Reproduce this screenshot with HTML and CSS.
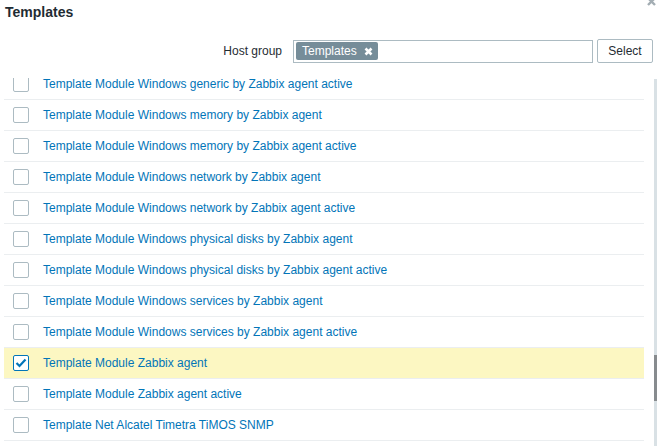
FILE: index.html
```html
<!DOCTYPE html>
<html>
<head>
<meta charset="utf-8">
<link rel="stylesheet" href="styles.css">
</head>
<body>
<div class="dialog">
  <div class="close"><svg width="9" height="9" viewBox="0 0 9 9"><path d="M1 1 L8 8 M8 1 L1 8" stroke="#a3adb3" stroke-width="2.4"/></svg></div>
  <h1 class="title">Templates</h1>
  <div class="filter">
    <label class="filter-label">Host group</label>
    <div class="multiselect">
      <span class="tag">Templates<svg class="tag-x" width="9" height="9" viewBox="0 0 9 9"><path d="M1.5 1.5 L7.5 7.5 M7.5 1.5 L1.5 7.5" stroke="#ffffff" stroke-width="2.6"/></svg></span>
    </div>
    <button class="btn">Select</button>
  </div>
  <div class="body">
    <div class="viewport">
      <ul class="list">
        <li class="row"><span class="cb"></span><a class="link">Template Module Windows generic by Zabbix agent active</a></li>
        <li class="row"><span class="cb"></span><a class="link">Template Module Windows memory by Zabbix agent</a></li>
        <li class="row"><span class="cb"></span><a class="link">Template Module Windows memory by Zabbix agent active</a></li>
        <li class="row"><span class="cb"></span><a class="link">Template Module Windows network by Zabbix agent</a></li>
        <li class="row"><span class="cb"></span><a class="link">Template Module Windows network by Zabbix agent active</a></li>
        <li class="row"><span class="cb"></span><a class="link">Template Module Windows physical disks by Zabbix agent</a></li>
        <li class="row"><span class="cb"></span><a class="link">Template Module Windows physical disks by Zabbix agent active</a></li>
        <li class="row"><span class="cb"></span><a class="link">Template Module Windows services by Zabbix agent</a></li>
        <li class="row"><span class="cb"></span><a class="link">Template Module Windows services by Zabbix agent active</a></li>
        <li class="row selected"><span class="cb checked"><svg width="14" height="14" viewBox="0 0 14 14"><path d="M2.5 7 L5.5 10 L11.5 3.5" fill="none" stroke="#0275b8" stroke-width="2.2"/></svg></span><a class="link">Template Module Zabbix agent</a></li>
        <li class="row"><span class="cb"></span><a class="link">Template Module Zabbix agent active</a></li>
        <li class="row"><span class="cb"></span><a class="link">Template Net Alcatel Timetra TiMOS SNMP</a></li>
      </ul>
    </div>
    <div class="scrollbar"><div class="thumb"></div></div>
  </div>
</div>
</body>
</html>
```
FILE: styles.css
```css
html, body {
  margin: 0;
  padding: 0;
  background: #ffffff;
  overflow: hidden;
}
body {
  font-family: "Liberation Sans", Arial, sans-serif;
  font-size: 12px;
  color: #1f2c33;
}
.dialog {
  position: relative;
  width: 657px;
  height: 446px;
  overflow: hidden;
}
.close {
  position: absolute;
  top: -3px;
  right: 1px;
  width: 9px;
  height: 9px;
  line-height: 0;
}
.title {
  margin: 0;
  padding: 4px 0 0 5px;
  font-size: 14px;
  line-height: 17px;
  font-weight: bold;
  color: #1f2c33;
  height: 17px;
}
.filter {
  display: flex;
  align-items: center;
  margin-top: 18px;
  height: 24px;
}
.filter-label {
  width: 282px;
  text-align: right;
  margin-right: 11px;
  color: #1f2c33;
}
.multiselect {
  box-sizing: border-box;
  width: 300px;
  height: 23px;
  border: 1px solid #acbbc2;
  background: #ffffff;
  display: flex;
  align-items: center;
  padding-left: 2px;
}
.tag {
  display: flex;
  align-items: center;
  height: 18px;
  background: #768d99;
  color: #ffffff;
  border-radius: 2px;
  padding: 0 5px 0 6px;
  line-height: 18px;
}
.tag-x {
  margin-left: 7px;
}
.btn {
  box-sizing: border-box;
  margin-left: 4px;
  width: 56px;
  height: 24px;
  border: 1px solid #acbbc2;
  border-radius: 2px;
  background: #ffffff;
  font-family: "Liberation Sans", Arial, sans-serif;
  font-size: 12px;
  color: #1f2c33;
  padding: 0;
}
.body {
  display: flex;
  margin-top: 15px;
  height: 368px;
}
.viewport {
  width: 640px;
  margin-left: 4px;
  height: 368px;
  overflow: hidden;
}
.list {
  list-style: none;
  margin: -9px 0 0 0;
  padding: 0;
}
.row {
  display: flex;
  align-items: center;
  height: 30px;
  border-bottom: 1px solid #ebeef0;
}
.row.selected {
  background: #fcf7c2;
}
.cb {
  box-sizing: border-box;
  width: 16px;
  height: 16px;
  border: 1px solid #acbbc2;
  border-radius: 2px;
  background: #ffffff;
  margin-left: 9px;
  margin-right: 14px;
  display: flex;
  align-items: center;
  justify-content: center;
}
.cb.checked {
  border-color: #0275b8;
}
.link {
  color: #0275b8;
  text-decoration: none;
}
.scrollbar {
  margin-left: 10px;
  margin-top: 1px;
  width: 3px;
  height: 367px;
  background: #d9e1e5;
}
.thumb {
  margin-top: 276px;
  height: 46px;
  background: #878b8e;
}
```
